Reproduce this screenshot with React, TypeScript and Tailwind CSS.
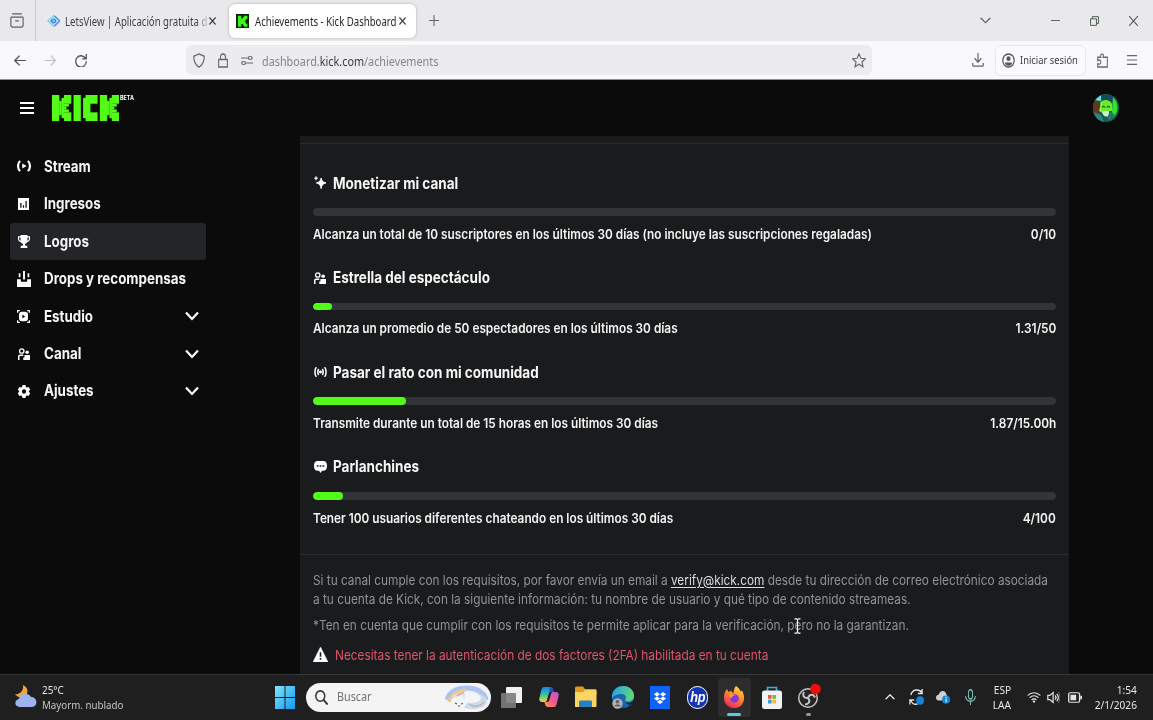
import type { ReactNode } from 'react'
import { clsx } from 'clsx'

interface IconProps {
  className?: string
}

interface NavItem {
  label: string
  icon: ReactNode
  active?: boolean
  expandable?: boolean
}

interface Achievement {
  title: string
  description: string
  progress: string
  percent: number
  icon: ReactNode
}

function Svg({ className, box = '0 0 16 16', children }: IconProps & { box?: string; children: ReactNode }) {
  return (
    <svg viewBox={box} preserveAspectRatio="none" fill="none" className={clsx('shrink-0', className)}>
      {children}
    </svg>
  )
}

function Text({ className, children }: { className?: string; children: ReactNode }) {
  return <span className={clsx('inline-block whitespace-nowrap', className)}>{children}</span>
}

/* Sidebar and achievement icons */
const StreamIcon = () => (
  <Svg className="w-[14px] h-[12px]">
    <path d="M3.6 1.2C.4 4.2.4 11.8 3.6 14.8M12.4 1.2c3.2 3 3.2 10.6 0 13.6" stroke="white" strokeWidth="2.5" />
    <path d="M6 4.6 11 8l-5 3.4z" fill="white" />
  </Svg>
)

const RevenueIcon = () => (
  <Svg className="w-[11px] h-[12px]">
    <path d="M0 0h16v16H0z" fill="white" />
    <path d="M4.2 6.5V13M8 9.5V13M11.8 4V13" stroke="#0b0b0b" strokeWidth="1.8" />
  </Svg>
)

const TrophyIcon = () => (
  <Svg className="w-[12px] h-[13px]">
    <path
      d="M3.4 0h9.2v1.6H16v3c0 2.4-1.5 3.8-3.7 4.1-.7 1.3-1.6 2-2.9 2.3v2.2h3V16H3.6v-2.8h3V11c-1.3-.3-2.2-1-2.9-2.3C1.5 8.4 0 7 0 4.6v-3h3.4zM1.5 3v1.5c0 1.3.6 2.1 1.9 2.5V3zm11.1 0v4c1.3-.4 1.9-1.2 1.9-2.5V3z"
      fill="white"
      fillRule="evenodd"
    />
  </Svg>
)

const DropsIcon = () => (
  <Svg className="w-[14px] h-[16px]">
    <path d="M0 8.2h4.4v2.6h7.2V8.2H16V16H0zM6.9 0h2.2v8.5H6.9zM2 2.2h1.9v4H2zM12.1 2.2H14v4h-1.9z" fill="white" />
  </Svg>
)

const StudioIcon = () => (
  <Svg className="w-[13px] h-[13px]">
    <path d="M0 3.500V0h3.500v1.500H1.500v2zM12.500 0H16v3.500h-1.500v-2h-2zM0 12.500h1.500v2h2V16H0zM16 12.500V16h-3.500v-1.500h2v-2z" fill="white" />
    <rect x="2.500" y="2.300" width="11" height="11.400" rx="3.500" fill="white" />
    <path d="M6.600 5.600 10 8l-3.400 2.400z" fill="#0b0b0b" />
  </Svg>
)

const PeopleIcon = () => (
  <Svg className="w-[12px] h-[12px]">
    <circle cx="5" cy="4" r="2.900" stroke="white" strokeWidth="1.800" />
    <path d="M1 16v-4.600c0-1.100.7-1.700 1.700-1.700H7" stroke="white" strokeWidth="2" />
    <circle cx="12.200" cy="5.600" r="2.400" fill="white" />
    <path d="M7 16v-3.200h1.600V9.200H16V16z" fill="white" />
  </Svg>
)

const GearIcon = () => (
  <Svg className="w-[12px] h-[13px]">
    <path
      d="M6 0h4l.5 2.400 1.400.8L14.200 2.500l2 3.500-1.800 1.600v.8l1.800 1.600-2 3.500-2.300-.7-1.400.8L10 16H6l-.5-2.400-1.400-.8-2.300.7-2-3.500 1.800-1.600v-.8L-.2 6l2-3.500 2.300.7 1.400-.8zM8 5.200a2.800 2.800 0 1 0 0 5.600 2.800 2.800 0 0 0 0-5.600z"
      fill="white"
      fillRule="evenodd"
    />
  </Svg>
)

const SparkleIcon = () => (
  <Svg className="mb-px w-[12px] h-[13px]">
    <path d="M9.500 2.500c.8 3.600 2.200 5.100 6.500 6-4.300 1-5.700 2.500-6.500 7-.8-4.500-2.200-6-6.500-7 4.300-.9 5.700-2.400 6.500-6z" fill="white" stroke="white" strokeWidth="1.200" />
    <path d="M2.700 0c.3 1.700.9 2.400 2.800 2.700-1.900.4-2.500 1-2.800 2.800C2.400 3.700 1.800 3.100 0 2.700 1.800 2.400 2.400 1.700 2.700 0z" fill="white" stroke="white" strokeWidth=".5" />
  </Svg>
)

const LiveIcon = () => (
  <Svg className="w-[13px] h-[12px]">
    <path d="M3 1.500c-2.500 3-2.500 10 0 13M13 1.500c2.500 3 2.500 10 0 13M5.700 4c-1.300 2-1.300 6 0 8M10.300 4c1.300 2 1.300 6 0 8" stroke="white" strokeWidth="1.900" />
    <circle cx="8" cy="8" r="1.900" fill="white" />
  </Svg>
)

const ChatIcon = () => (
  <Svg className="w-[13px] h-[12px]">
    <path d="M4.500 0h7C14.500 0 16 2.300 16 6.500S14.500 13 11.500 13H9.800L8 16l-1.800-3H4.500C1.500 13 0 10.700 0 6.500S1.500 0 4.500 0z" fill="white" />
    <path d="M3.300 5.600h2.200v2H3.300zM6.900 5.600h2.200v2H6.900zM10.500 5.600h2.200v2h-2.200z" fill="#191b1d" />
  </Svg>
)

/* Pixel wordmark laid out on a 28 x 9 grid */
const K_BLOCKS = [
  [0, 0, 3, 9],
  [3, 2, 1, 5],
  [4, 1, 1, 7],
  [5, 0, 3, 3],
  [5, 3, 2, 1],
  [5, 4, 1, 1],
  [5, 5, 2, 1],
  [5, 6, 3, 3],
]
const C_BLOCKS = [
  [1, 0, 5, 3],
  [0, 1, 3, 7],
  [1, 6, 5, 3],
]

function KickLogo() {
  const blocks = [
    ...K_BLOCKS,
    [9, 0, 3, 9],
    ...C_BLOCKS.map(([x, y, w, h]) => [x + 13, y, w, h]),
    ...K_BLOCKS.map(([x, y, w, h]) => [x + 20, y, w, h]),
  ]
  return (
    <Svg box="0 0 28 9" className="w-[67px] h-[26px]">
      {blocks.map(([x, y, w, h], i) => (
        <rect key={i} x={x} y={y} width={w + 0.05} height={h + 0.02} fill="#53fc18" />
      ))}
    </Svg>
  )
}

function Avatar() {
  return (
    <Svg box="0 0 26 28" className="w-[26px] h-[28px] rounded-full">
      <rect width="26" height="28" fill="#1d5a50" />
      <path d="M0 8h7v11H0z" fill="#5b3a20" />
      <path d="M2 6 8 1v6z" fill="#63e6d8" />
      <path d="M9 1h10l4 8-3 4-6-8-5 4z" fill="#174a5e" />
      <path d="M20 3c6 6 6 15 0 21l-1-7z" fill="#33e32b" />
      <path d="M7 9c2-4 10-4 12 1v7H8z" fill="#6bea2a" />
      <path d="M9 13.500c.5-1.500 2.500-1.500 3 0M14 13.500c.5-1.500 2.500-1.500 3 0" stroke="#14621c" strokeWidth="1.100" />
      <path d="M8 17h8v6l-5-1z" fill="#c9f6c4" />
      <path d="M0 18l8 3 3 7H5z" fill="#2d8581" />
      <path d="M17 17l5 4-5 6-3-3z" fill="#227a6b" />
      <path d="M9 7 6 17l2 1z" fill="#a4f45c" />
    </Svg>
  )
}

function Chevron() {
  return (
    <Svg box="0 0 14 10" className="w-[14px] h-[10px]">
      <path d="m1 1.500 6 6.500 6-6.500" stroke="white" strokeWidth="2.200" />
    </Svg>
  )
}

const navItems: NavItem[] = [
  { label: 'Stream', icon: <StreamIcon /> },
  { label: 'Ingresos', icon: <RevenueIcon /> },
  { label: 'Logros', icon: <TrophyIcon />, active: true },
  { label: 'Drops y recompensas', icon: <DropsIcon /> },
  { label: 'Estudio', icon: <StudioIcon />, expandable: true },
  { label: 'Canal', icon: <PeopleIcon />, expandable: true },
  { label: 'Ajustes', icon: <GearIcon />, expandable: true },
]

const achievements: Achievement[] = [
  {
    title: 'Monetizar mi canal',
    description: 'Alcanza un total de 10 suscriptores en los últimos 30 días (no incluye las suscripciones regaladas)',
    progress: '0/10',
    percent: 0,
    icon: <SparkleIcon />,
  },
  {
    title: 'Estrella del espectáculo',
    description: 'Alcanza un promedio de 50 espectadores en los últimos 30 días',
    progress: '1.31/50',
    percent: 2.62,
    icon: <PeopleIcon />,
  },
  {
    title: 'Pasar el rato con mi comunidad',
    description: 'Transmite durante un total de 15 horas en los últimos 30 días',
    progress: '1.87/15.00h',
    percent: 12.5,
    icon: <LiveIcon />,
  },
  {
    title: 'Parlanchines',
    description: 'Tener 100 usuarios diferentes chateando en los últimos 30 días',
    progress: '4/100',
    percent: 4,
    icon: <ChatIcon />,
  },
]

function TabBar() {
  return (
    <div className="flex h-[41px] items-center bg-[#e9e9eb] text-[#3b3b40]">
      <div className="flex h-full w-[36px] items-center justify-center border-r border-[#c9c9cc] pr-[2px]">
        <Svg className="w-[14px] h-[15px]">
          <path d="M2.500 1h11M1 4.500h14M1 4.500v8c0 1.500.8 2.500 2.200 2.500h9.600c1.400 0 2.200-1 2.200-2.500v-8M6 8.500h4" stroke="#606065" strokeWidth="1.300" />
        </Svg>
      </div>
      <div className="flex h-full w-[193px] items-center pl-[11px]">
        <Svg className="mr-[5px] w-[13px] h-[12px]">
          <path d="M8 0 16 8l-8 8-8-8z" fill="#7cc9ee" />
          <path d="m8 2.500 5.500 5.500L8 13.500 2.500 8z" stroke="#dff2fb" strokeWidth="1" />
          <path d="m9 1 7 7-7 7" stroke="#5287e8" strokeWidth="1.500" />
          <circle cx="8" cy="8" r="2.500" stroke="#3f6fe0" strokeWidth="1.300" />
        </Svg>
        <div className="-mt-px w-[140px]">
          <Text className="origin-left scale-x-[0.8] bg-linear-to-r from-[#3b3b40] from-92% to-[#c9c9cc] bg-clip-text font-['Noto_Sans'] text-[12px] text-transparent">
            LetsView | Aplicación gratuita d
          </Text>
        </div>
        <Svg className="ml-[4px] w-[7px] h-[8px]">
          <path d="m1 1 14 14M15 1 1 15" stroke="#3b3b40" strokeWidth="2.600" />
        </Svg>
      </div>
      <div className="flex h-[34px] w-[187px] items-center rounded-md bg-white pl-[7px] shadow-[0_0_3px_rgba(0,0,0,0.25)]">
        <Svg className="mr-[6px] w-[13px] h-[14px]">
          <path d="M0 0h16v16H0z" fill="#0c2408" />
          <path d="M2.500 2h4v3h2V3.500h1.500V2H14v4h-2v2h-1v1h1v2h2v3.500h-4V13H8.500v-1.500h-2v3h-4z" fill="#3df51b" />
        </Svg>
        <div className="-mt-px w-[142px]">
          <Text className="origin-left scale-x-[0.8] font-['Noto_Sans'] text-[12px] text-[#26262b]">Achievements - Kick Dashboard</Text>
        </div>
        <Svg className="ml-[2px] w-[7px] h-[8px]">
          <path d="m1 1 14 14M15 1 1 15" stroke="#3b3b40" strokeWidth="2.600" />
        </Svg>
      </div>
      <Svg className="ml-[13px] w-[10px] h-[11px]">
        <path d="M8 0v16M0 8h16" stroke="#66666b" strokeWidth="1.700" />
      </Svg>
      <div className="ml-auto flex items-center pr-[15px]">
        <Svg className="mr-[60px] w-[11px] h-[7px]">
          <path d="m1 2 7 11 7-11" stroke="#66666b" strokeWidth="2.200" />
        </Svg>
        <div className="mr-[30px] h-px w-[9px] bg-[#66666b]" />
        <Svg className="mr-[30px] w-[9px] h-[10px]">
          <path d="M1 4.500h10.500V15H1zM4 4V1h11v11h-3" stroke="#4a5a50" strokeWidth="1.600" />
        </Svg>
        <Svg className="w-[9px] h-[10px]">
          <path d="m0 0 16 16M16 0 0 16" stroke="#4a4a4f" strokeWidth="1.700" />
        </Svg>
      </div>
    </div>
  )
}

function AddressBar() {
  return (
    <div className="flex h-[39px] items-center border-b border-[#8f8f92] bg-[#f9f9fb] text-[#5b5b66]">
      <Svg className="ml-[14px] w-[12px] h-[11px]">
        <path d="M16 8H1M7.500 1 1 8l6.500 7" stroke="#55555a" strokeWidth="1.800" />
      </Svg>
      <Svg className="ml-[19px] w-[11px] h-[11px]">
        <path d="M0 8h15M8.500 1 15 8l-6.500 7" stroke="#c0c0c3" strokeWidth="1.800" />
      </Svg>
      <Svg className="ml-[19px] w-[12px] h-[13px]">
        <path d="M14 5.500A7 7 0 1 0 15 9M15 0v6H9.500" stroke="#55555a" strokeWidth="1.700" />
      </Svg>
      <div className="ml-[99px] flex h-[30px] w-[686px] items-center rounded-md bg-[#ececee]">
        <Svg className="ml-[7px] w-[12px] h-[15px]">
          <path d="M8 1 15 3.500c0 5-1.500 9-7 11.500-5.500-2.500-7-6.500-7-11.500z" stroke="#66666b" strokeWidth="1.500" />
        </Svg>
        <Svg className="ml-[13px] w-[10px] h-[15px]">
          <path d="M1 7h14v8H1zM4 7V4c0-4 8-4 8 0v3" stroke="#66666b" strokeWidth="1.700" />
        </Svg>
        <Svg className="ml-[13px] w-[12px] h-[9px]">
          <path d="M0 3.500h9M7 12.500h9" stroke="#66666b" strokeWidth="1.700" />
          <circle cx="12.300" cy="3.500" r="2.600" stroke="#66666b" strokeWidth="1.600" />
          <circle cx="3.500" cy="12.500" r="2.600" stroke="#66666b" strokeWidth="1.600" />
        </Svg>
        <Text className="ml-[9px] mt-[3px] origin-left scale-x-[0.833] font-['Noto_Sans'] text-[13px] text-[#85858a]">
          dashboard.<span className="text-[#3a3a40]">kick.com</span>/achievements
        </Text>
        <Svg className="mr-[6px] ml-auto w-[14px] h-[15px]">
          <path d="m8 .8 2.100 4.800 5.200.5-3.900 3.500 1.100 5.100L8 12l-4.500 2.700 1.100-5.100L.7 6.100l5.200-.5z" stroke="#66666b" strokeWidth="1.300" />
        </Svg>
      </div>
      <Svg className="ml-auto w-[12px] h-[14px]">
        <path d="M8 0v10M3.500 6 8 10.500 12.500 6M1 11.500V14c0 .7.400 1 1 1h12c.6 0 1-.3 1-1v-2.500" stroke="#66666b" strokeWidth="1.600" />
      </Svg>
      <div className="ml-[11px] flex h-[31px] w-[91px] items-center rounded-md border border-[#e7e7ea] bg-[#fbfbfd] pl-[6px]">
        <Svg className="w-[13px] h-[15px]">
          <circle cx="8" cy="8" r="7" stroke="#55555a" strokeWidth="1.500" />
          <circle cx="8" cy="6" r="2.600" fill="#55555a" />
          <path d="M3.500 10h9c-.5 2.500-2 3.500-4.500 3.500S4 12.500 3.500 10z" fill="#55555a" />
        </Svg>
        <Text className="ml-[5px] w-[60px] origin-left scale-x-[0.85] font-['Noto_Sans'] text-[11px] text-[#3b3b40]">Iniciar sesión</Text>
      </div>
      <Svg className="ml-[11px] w-[11px] h-[15px]">
        <path d="M1 7V4.500h4.500C4 1 9.500 0 9.500 3c0 .6-.2 1-.5 1.500h6V15H1v-3.500c3 1 4.500-.2 4.500-1.800S4 6.500 1 8z" stroke="#66666b" strokeWidth="1.500" />
      </Svg>
      <Svg className="mr-[16px] ml-[19px] w-[10px] h-[10px]">
        <path d="M0 1h16M0 8h16M0 15h16" stroke="#66666b" strokeWidth="1.700" />
      </Svg>
    </div>
  )
}

function Sidebar() {
  return (
    <nav className="w-[300px] pt-[11.700px] pl-[10px]">
      {navItems.map((item) => (
        <div
          key={item.label}
          className={clsx('flex h-[37.450px] w-[196px] items-center rounded-[3px]', item.active && 'bg-[#242529]')}
        >
          <div className="flex w-[27px] shrink-0 justify-center">{item.icon}</div>
          <Text className="ml-[7px] w-[135px] origin-left scale-x-[0.862] text-[15.500px] font-bold text-[#f6f6f6]">{item.label}</Text>
          {item.expandable && (
            <div className="ml-[6px]">
              <Chevron />
            </div>
          )}
        </div>
      ))}
    </nav>
  )
}

function AchievementRow({ title, description, progress, percent, icon }: Achievement) {
  return (
    <div className="h-[94.600px]">
      <div className="flex h-[20px] items-center">
        <div className="flex w-[14px] justify-center">{icon}</div>
        <Text className="ml-[6px] origin-left scale-x-[0.871] text-[15.500px] font-bold text-[#f6f6f6]">{title}</Text>
      </div>
      <div className="mt-[15px] h-[7.500px] overflow-hidden rounded-[4px] bg-[#313538]">
        <div className="h-full rounded-[4px] bg-[#53fc18]" style={{ width: `${percent}%` }} />
      </div>
      <div className="mt-[8.900px] flex h-[20px] items-center justify-between text-[13.200px] font-semibold text-[#f4f4f4]">
        <Text className="origin-left scale-x-[0.896]">{description}</Text>
        <Text className="origin-right scale-x-[0.9]">{progress}</Text>
      </div>
    </div>
  )
}

function AchievementsCard() {
  return (
    <main className="relative w-[769px] bg-[#191b1d]">
      <div className="h-[8px] border-b border-[#292c2e]" />
      <div className="h-[411px] border-b border-[#292c2e] px-[13px] pt-[29.300px]">
        {achievements.map((item) => (
          <AchievementRow key={item.title} {...item} />
        ))}
      </div>
      <div className="px-[13px] pt-[16px] text-[13.200px] leading-[19px] text-[#8e9499]">
        <Text className="origin-left scale-x-[0.8965]">
          Si tu canal cumple con los requisitos, por favor envía un email a{' '}
          <span className="text-[#dcdcdc] underline underline-offset-2">verify@kick.com</span> desde tu dirección de correo electrónico asociada
        </Text>
        <Text className="origin-left scale-x-[0.8965]">
          a tu cuenta de Kick, con la siguiente información: tu nombre de usuario y qué tipo de contenido streameas.
        </Text>
        <Text className="mt-[7px] origin-left scale-x-[0.8985]">
          *Ten en cuenta que cumplir con los requisitos te permite aplicar para la verificación, pero no la garantizan.
        </Text>
        <div className="mt-[11px] flex items-center">
          <Svg className="mb-[2px] w-[15px] h-[15px]">
            <path d="M8 0 16 16H0z" fill="white" stroke="white" strokeWidth=".5" strokeLinejoin="round" />
            <path d="M8 5.500v5M8 11.700v2" stroke="#191b1d" strokeWidth="1.700" />
          </Svg>
          <Text className="ml-[7px] origin-left scale-x-[0.8975] text-[#e2566b]">
            Necesitas tener la autenticación de dos factores (2FA) habilitada en tu cuenta
          </Text>
        </div>
      </div>
      {/* Text cursor */}
      <Svg box="0 0 7 16" className="absolute top-[482px] left-[494px] w-[7px] h-[16px]">
        <path d="M.5.800h2l1 .8 1-.8h2M3.500 1.500v13M.5 15.200h2l1-.8 1 .8h2" stroke="white" strokeWidth="1.200" />
      </Svg>
    </main>
  )
}

/* Taskbar icons */
const WindowsIcon = () => (
  <Svg className="w-[20px] h-[23px]">
    <defs>
      <linearGradient id="win" x1="0" y1="0" x2="1" y2="1">
        <stop stopColor="#7ee6fb" />
        <stop offset="1" stopColor="#1598f0" />
      </linearGradient>
    </defs>
    <path d="M0 0h7.600v7.600H0zM8.400 0H16v7.600H8.400zM0 8.400h7.600V16H0zM8.400 8.400H16V16H8.400z" fill="url(#win)" />
  </Svg>
)

const TaskViewIcon = () => (
  <Svg box="0 0 21 21" className="w-[21px] h-[21px]">
    <rect x="5" y="0" width="16" height="16" rx="1" fill="#f1f1f1" />
    <rect x="0" y="6" width="15" height="15" rx="1" fill="#7b7b7b" fillOpacity=".9" />
  </Svg>
)

const CopilotIcon = () => (
  <Svg box="0 0 20 20" className="w-[20px] h-[20px]">
    <defs>
      <linearGradient id="cpA" x1="0" y1="0" x2="0" y2="1">
        <stop stopColor="#1a7fe8" />
        <stop offset=".5" stopColor="#35c4a0" />
        <stop offset="1" stopColor="#f6cf3a" />
      </linearGradient>
      <linearGradient id="cpB" x1="1" y1="0" x2="0" y2="1">
        <stop stopColor="#b457e8" />
        <stop offset=".5" stopColor="#f2588f" />
        <stop offset="1" stopColor="#ff9840" />
      </linearGradient>
    </defs>
    <path d="M5 0h6c2 0 2.500 1 3 3l.6 2H12c-1.500 0-2 .8-2.400 2.200L8 13c-.5 1.500-1.200 2-2.500 2H3c-2 0-3.200-1.500-2.600-4L2.500 2.500C3 .8 3.800 0 5 0z" fill="url(#cpA)" />
    <path d="M11 0c2 0 2.500 1 3 3l.6 2H12l-2 1z" fill="#2053c4" />
    <path d="M15 20H9c-2 0-2.500-1-3-3l-.6-2H8c1.500 0 2-.8 2.400-2.200L12 7c.5-1.500 1.200-2 2.500-2H17c2 0 3.200 1.500 2.600 4l-2.100 8.500c-.5 1.700-1.300 2.500-2.500 2.500z" fill="url(#cpB)" />
  </Svg>
)

const ExplorerIcon = () => (
  <Svg box="0 0 22 22" className="w-[22px] h-[22px]">
    <path d="M0 2c0-1 .5-1.500 1.500-1.500H8l2 2.500h10c1 0 1.500.5 1.500 1.500V9H0z" fill="#d99a22" />
    <path d="M0 6h8l2-2h10.500c.7 0 1 .4 1 1V20c0 .7-.4 1-1 1H1c-.6 0-1-.4-1-1z" fill="#fcd462" />
    <path d="M4 21v-5c0-1 .5-1.500 1.500-1.500h10c1 0 1.500.5 1.500 1.500v5z" fill="#2a7fc2" />
  </Svg>
)

const EdgeIcon = () => (
  <Svg box="0 0 22 24" className="w-[22px] h-[24px]">
    <defs>
      <linearGradient id="edge" x1="0" y1=".3" x2="1" y2=".5">
        <stop stopColor="#2d9fe6" />
        <stop offset="1" stopColor="#5ddc76" />
      </linearGradient>
    </defs>
    <circle cx="11" cy="12" r="11" fill="#1766b8" />
    <path d="M0 12C0 5 5 1 11 1c7 0 11 5 11 9.500 0 4-3 6-6 6-2.500 0-3.500-1-2.500-2.500S14 9 9.500 9C5 9 0 11 0 15z" fill="url(#edge)" />
    <path d="M8 14c0 6 6 8 12 5l-1 2-8-1c-3-2-4-4-3-6z" fill="#0f3f86" />
    <path d="M14 17c2 1.500 6 1 7.500-1.500L20 19c-3 1.500-6 0-6-2z" fill="#1f1f1f" />
    <circle cx="5.500" cy="18.500" r="5.200" fill="#b4b4b4" />
    <circle cx="5.500" cy="16.700" r="1.900" fill="#666" />
    <path d="M2.300 21.500c.5-3 6-3 6.500 0z" fill="#666" />
  </Svg>
)

const DropboxIcon = () => (
  <Svg box="0 0 20 23" className="w-[20px] h-[23px]">
    <path d="M0 0h20v23H0z" fill="#1061fe" />
    <path d="m7 6 3 2.200-3 2.200-3-2.200zM13 6l3 2.200-3 2.200-3-2.200zM7 10.400l3 2.200-3 2.200-3-2.200zM13 10.400l3 2.200-3 2.200-3-2.200zM10 13.700l3 2.200-3 2.200-3-2.200z" fill="white" />
  </Svg>
)

const HpIcon = () => (
  <div className="flex h-[23px] w-[21px] items-center justify-center rounded-full border border-white bg-[#1635b4] pb-[2px] font-['Liberation_Sans'] text-[15px] leading-none font-bold tracking-[-0.5px] text-white italic">
    <span className="scale-x-[0.85]">hp</span>
  </div>
)

const FirefoxIcon = () => (
  <Svg box="0 0 20 22" className="w-[20px] h-[22px]">
    <defs>
      <linearGradient id="fox" x1=".8" y1="0" x2=".3" y2="1">
        <stop stopColor="#ffe14d" />
        <stop offset=".45" stopColor="#ff8a2b" />
        <stop offset="1" stopColor="#f0235f" />
      </linearGradient>
    </defs>
    <path d="M12 0c3 2 4 3.500 4.300 5.500L18 4.500c3 5 2.500 10.500 0 14-3.500 4.500-11.500 4.800-15.500.3C-.8 15-.5 9 1.500 5L3 3l1.500 3 3-1.500c0 1.500.5 2 2 2.500C10 4 10 2 12 0z" fill="url(#fox)" />
    <circle cx="10.500" cy="12.500" r="4.300" fill="#8438d9" />
    <path d="M5 9c2-1 4-1 6 .5-2 .2-3 1-3.200 2.500C6 12 5 11 5 9z" fill="#ff9d2e" />
  </Svg>
)

const StoreIcon = () => (
  <Svg box="0 0 20 23" className="w-[20px] h-[23px]">
    <path d="M5.500 6V1.500h9V6" stroke="#35b1e6" strokeWidth="1.700" />
    <rect x="0" y="4.500" width="20" height="18.500" rx="2.500" fill="#f1f2f4" />
    <path d="M6 9h3.600v3.800H6z" fill="#e8573b" />
    <path d="M10.400 9H14v3.800h-3.600z" fill="#7fb83c" />
    <path d="M6 13.700h3.600v3.800H6z" fill="#2f9fe0" />
    <path d="M10.400 13.700H14v3.800h-3.600z" fill="#f4b92d" />
  </Svg>
)

const ObsIcon = () => (
  <Svg box="0 0 24 26" className="mb-[2px] w-[24px] h-[26px]">
    <circle cx="11" cy="15" r="9.300" fill="#252525" stroke="#c4c4c4" strokeWidth="1.500" />
    <path d="M11 15c-4.500.5-6-3-4-6M11 15c1.500-4.500 5.500-4 7-.5M11 15c3 3.500.5 6.500-3 6.500" stroke="#c4c4c4" strokeWidth="2" />
    <circle cx="18.500" cy="6" r="5.300" fill="#f60b0b" />
  </Svg>
)

const taskbarApps: { name: string; icon: ReactNode; active?: boolean; open?: boolean }[] = [
  { name: 'taskview', icon: <TaskViewIcon /> },
  { name: 'copilot', icon: <CopilotIcon /> },
  { name: 'explorer', icon: <ExplorerIcon /> },
  { name: 'edge', icon: <EdgeIcon /> },
  { name: 'dropbox', icon: <DropboxIcon /> },
  { name: 'hp', icon: <HpIcon /> },
  { name: 'firefox', icon: <FirefoxIcon />, active: true },
  { name: 'store', icon: <StoreIcon /> },
  { name: 'obs', icon: <ObsIcon />, open: true },
]

function Taskbar() {
  return (
    <footer className="flex h-[46px] items-center border-t border-[#38393a] bg-[#1f1f1f] pb-px font-['Noto_Sans'] text-[#e8e8e8]">
      <div className="flex w-[275px] items-center pl-[15px]">
        <Svg box="0 0 22 24" className="mb-[2px] w-[22px] h-[24px]">
          <path d="M8 1c5 2 6 8 2 12C7 15 2 13 0 10c5 1 9-4 8-9z" fill="#f0a53a" />
          <path d="M5 23c-6 0-6-7-1-8 1-6 9-7 12-2 7 0 7 10 1 10z" fill="#9cb3ee" />
        </Svg>
        <div className="-mt-px ml-[5px] flex flex-col text-[11px] leading-[15px]">
          <Text className="w-[90px] origin-left scale-x-[0.9]">25°C</Text>
          <Text className="w-[90px] origin-left scale-x-[0.885] text-[#c4c4c4]">Mayorm. nublado</Text>
        </div>
      </div>
      <WindowsIcon />
      <div className="ml-[11px] flex h-[29px] w-[185px] items-center rounded-full bg-[#f4f4f4] pl-[9px]">
        <Svg className="w-[13px] h-[15px]">
          <circle cx="6.500" cy="6.500" r="5.500" stroke="#333" strokeWidth="1.800" />
          <path d="m10.500 10.500 5 5" stroke="#333" strokeWidth="2.200" />
        </Svg>
        <Text className="ml-[9px] origin-left scale-x-[0.86] text-[12.500px] text-[#717171]">Buscar</Text>
        <Svg box="0 0 44 25" className="mr-[2px] ml-auto w-[44px] h-[25px]">
          <path d="M2 15C4 7 12 3 22 3s18 5 19 12" stroke="#a9c5ef" strokeWidth="5" />
          <path d="M4 17C6 10 12 6 21 5" stroke="#f1ca87" strokeWidth="3" />
          <path d="M7 18c2-6 6-9 12-10" stroke="#e6a6b6" strokeWidth="2" />
          <ellipse cx="28" cy="16" rx="14" ry="8" fill="#cfd9e4" />
          <ellipse cx="26" cy="13" rx="10" ry="5" fill="#f3f6f9" />
          <ellipse cx="14" cy="17" rx="8" ry="6" fill="#f3f6f9" />
          <path d="m8 13 1-4 4 3zM16 11l4-2v5z" fill="#dde4ec" />
          <path d="m10 18 2 1M16 19l2-.5M13 21h2" stroke="#4a4f58" strokeWidth="1.100" />
          <path d="M24 19c5 4 12 2 15-2" stroke="#97a9bd" strokeWidth="1" />
        </Svg>
      </div>
      <div className="ml-[2px] flex">
        {taskbarApps.map((app) => (
          <div key={app.name} className="relative flex h-[39px] w-[37.150px] items-center justify-center">
            {app.active && <div className="absolute inset-x-[2px] inset-y-0 rounded bg-[#2d2d2e]" />}
            <div className="relative">{app.icon}</div>
            {app.active && <div className="absolute bottom-[1px] h-[3px] w-[14px] rounded-full bg-[#62c5e8]" />}
            {app.open && <div className="absolute bottom-[1px] h-[3px] w-[5px] rounded-full bg-[#969696]" />}
          </div>
        ))}
      </div>
      <div className="ml-auto flex items-center pr-[16px]">
        <Svg className="mr-[14px] w-[10px] h-[6px]">
          <path d="m1 14 7-12 7 12" stroke="#f0f0f0" strokeWidth="2.400" />
        </Svg>
        <Svg className="mr-[12px] w-[15px] h-[16px]">
          <path d="M2 6c1.500-6 9-6.500 12-2M14 0v4.500H9.500M9 15C5 16 2.500 14 2 11M1 15.500V11h4.500" stroke="#e4e4e4" strokeWidth="1.400" />
          <circle cx="11.800" cy="11.500" r="4.200" fill="#1683dd" />
        </Svg>
        <Svg className="mr-[15px] w-[14px] h-[14px]">
          <path d="M3 12c-4-.5-4-6 0-6.500C4 1 9-.5 11 3l2 4v5z" fill="#d0d0d0" />
          <circle cx="11.500" cy="11" r="4.600" fill="#1683dd" />
          <path d="M11.500 7.800v1.400M11.500 10v4" stroke="white" strokeWidth="1.300" />
        </Svg>
        <Svg className="mr-[17px] w-[11px] h-[16px]">
          <rect x="5" y=".7" width="6" height="9.300" rx="3" stroke="#7fc4b4" strokeWidth="1.400" />
          <path d="M1 7c0 7 14 7 14 0M8 12.500V16" stroke="#7fc4b4" strokeWidth="1.500" />
        </Svg>
        <div className="flex w-[18px] flex-col items-center text-[11px] leading-[15px]">
          <Text className="scale-x-[0.92]">ESP</Text>
          <Text className="scale-x-[0.92]">LAA</Text>
        </div>
        <Svg className="mr-[6px] ml-[16px] w-[14px] h-[12px]">
          <path d="M.7 6C5 1 11 1 15.300 6M3 9c3-3.500 7-3.500 10 0M5.300 12c1.500-2 3.900-2 5.400 0" stroke="#e4e4e4" strokeWidth="1.500" />
          <circle cx="8" cy="14" r="1.500" fill="#e4e4e4" />
        </Svg>
        <Svg className="mr-[8px] w-[13px] h-[13px]">
          <path d="M1 5.500h2.500L7.500 2v12l-4-3.500H1zM10 5.500c1.300 1.500 1.300 3.500 0 5M12 3.500c2.500 2.500 2.500 6.500 0 9" stroke="#e4e4e4" strokeWidth="1.500" />
          <path d="M13.800 1.500c3 3.500 3 9.500 0 13" stroke="#7d7d7d" strokeWidth="1.200" />
        </Svg>
        <Svg className="w-[14px] h-[11px]">
          <rect x=".8" y="1" width="12.400" height="14" rx="2" stroke="#e4e4e4" strokeWidth="1.500" />
          <path d="M2.800 4h6.500v8H2.800z" fill="#e4e4e4" />
          <path d="M14 5.500h2v5h-2z" fill="#e4e4e4" />
        </Svg>
        <div className="-mt-px flex w-[55px] flex-col items-end text-[11px] leading-[15px]">
          <Text className="origin-right scale-x-[0.92]">1:54</Text>
          <Text className="origin-right scale-x-[0.92]">2/1/2026</Text>
        </div>
      </div>
    </footer>
  )
}

export default function App() {
  return (
    <div className="flex h-[720px] w-[1153px] flex-col overflow-hidden bg-[#0b0b0b] font-['Inter',sans-serif]">
      <TabBar />
      <AddressBar />
      <header className="flex h-[56px] shrink-0 items-center bg-[#0b0b0b] pl-[20px]">
        <Svg className="w-[14px] h-[12px]">
          <path d="M0 1.300h16M0 8h16M0 14.700h16" stroke="white" strokeWidth="2.500" />
        </Svg>
        <div className="ml-[18px] flex items-start">
          <KickLogo />
          <Text className="ml-[1px] w-[14px] origin-left scale-x-[0.9] text-[6px] leading-[6px] font-bold text-white">BETA</Text>
        </div>
        <div className="mr-[34px] ml-auto">
          <Avatar />
        </div>
      </header>
      <div className="flex h-[538px]">
        <Sidebar />
        <AchievementsCard />
      </div>
      <Taskbar />
    </div>
  )
}
